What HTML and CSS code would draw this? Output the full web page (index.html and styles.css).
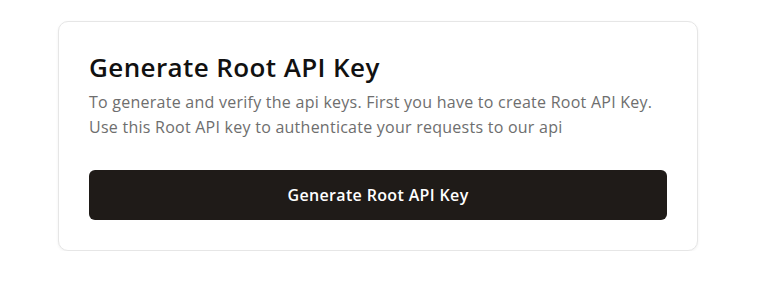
FILE: index.html
```html
<!DOCTYPE html>
<html lang="en">
<head>
<meta charset="utf-8">
<link rel="stylesheet" href="styles.css">
</head>
<body>
<main class="page">
  <section class="card">
    <h1 class="title">Generate Root API Key</h1>
    <p class="desc">To generate and verify the api keys. First you have to create Root API Key. Use this Root API key to authenticate your requests to our api</p>
    <button class="btn" type="button">Generate Root API Key</button>
  </section>
</main>
</body>
</html>
```
FILE: styles.css
```css
html, body {
  margin: 0;
  padding: 0;
  background: #ffffff;
}
body {
  font-family: "Open Sans", "Noto Sans", sans-serif;
}
.page {
  padding: 21px 0 0 58px;
}
.card {
  box-sizing: border-box;
  width: 640px;
  padding: 30px;
  border: 1px solid #e6e6e6;
  border-radius: 10px;
  background: #fff;
  box-shadow: 0 1px 3px rgba(0,0,0,0.06);
}
.title {
  margin: 0;
  font-size: 26px;
  line-height: 30px;
  font-weight: 600;
  color: #111;
  letter-spacing: 0.4px;
}
.desc {
  margin: 8px 0 0;
  width: 575px;
  font-size: 16px;
  line-height: 25px;
  color: #6e6e6e;
  letter-spacing: 0.25px;
}
.btn {
  display: block;
  width: 100%;
  height: 50px;
  margin-top: 30px;
  border: 0;
  border-radius: 6px;
  background: #1f1b18;
  color: #fff;
  font-family: inherit;
  font-size: 16px;
  font-weight: 600;
  letter-spacing: 0.35px;
  cursor: pointer;
}
```
